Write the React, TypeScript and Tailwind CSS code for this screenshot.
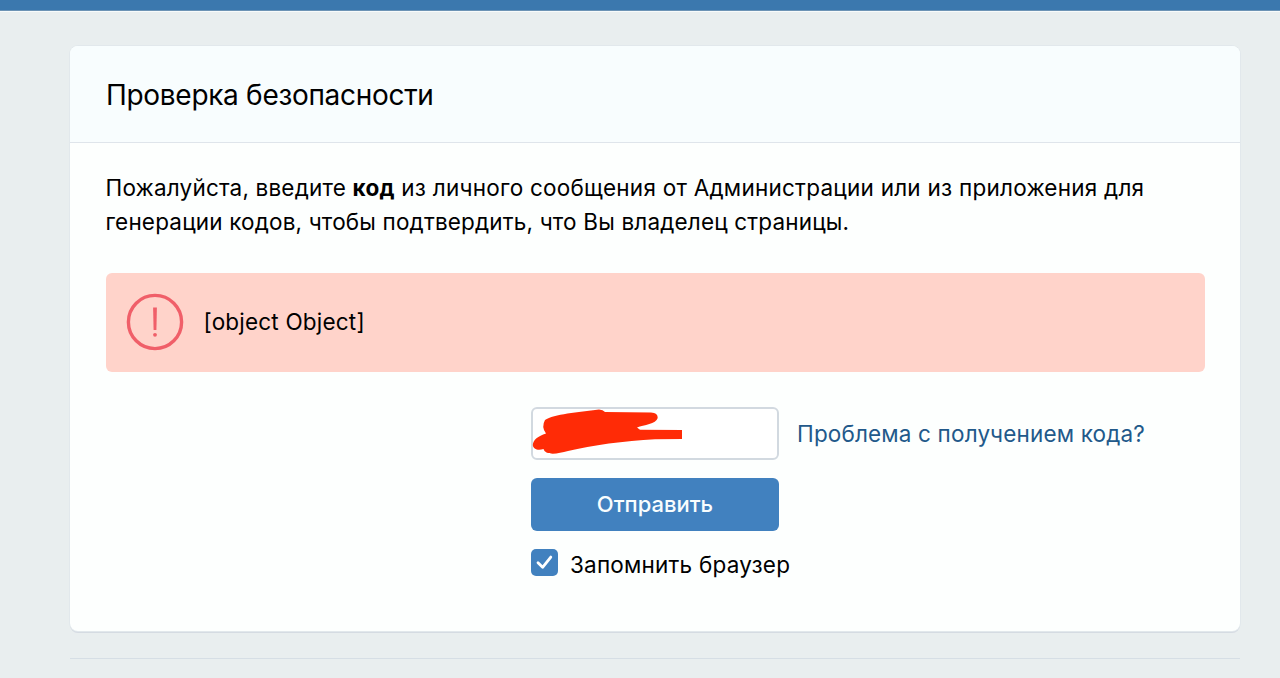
/* Security check page: confirm ownership with a code */

import React, { useState } from "react";

function ErrorNotice({ message }: { message: string }) {
  return (
    <div className="-mx-[0.5px] mt-[34px] flex h-[99px] items-center rounded-md bg-[#ffd3ca] pb-px pl-[21px]">
      <svg width="58" height="58" viewBox="0 0 58 58" fill="none" className="-ml-px shrink-0">
        <circle cx="29" cy="29" r="26.6" stroke="#f05f69" strokeWidth="3.4" />
        <path d="M27.1 14.5h3.8l-.5 22.5h-2.8z" fill="#f05f69" />
        <circle cx="29" cy="41.8" r="1.9" fill="#f05f69" />
      </svg>
      <span className="ml-5 text-[22.5px] tracking-[0.2px]">{message}</span>
    </div>
  );
}

function CodeField() {
  return (
    <div className="relative h-[53px] w-[248px] rounded-md border-2 border-[#d2d9e0] bg-white">
      <svg
        width="248"
        height="53"
        viewBox="531 407 248 53"
        className="absolute -left-0.5 -top-0.5"
        fill="#ff2b06"
      >
        <path d="M545 420C554 414 578 412 599 409.4Q603 409.5 605 412L651 412.4Q658 412.7 657.7 418C656 424 644 425 637 427.5L640 429.7L682 430V439L655 439.2C624 441 592 445 568 451C560 453 552 455 546.5 452.5Q544 451 543.5 449C538 451 533 449 532.8 445C533 440 538 436 546 433.5Q541 427 545 420Z" />
      </svg>
    </div>
  );
}

export default function App() {
  const [remember, setRemember] = useState(true);

  return (
    <div className="h-[678px] overflow-hidden bg-[#e9eeef] font-['Inter','Noto_Sans',sans-serif] text-black">
      <div className="h-[11px] border-b border-[#6d93b5] bg-[#3b78ae]" />
      <div className="h-px bg-[#f8fbfb]" />

      <main className="mt-[34px] ml-[70px] w-[1170px]">
        <section className="h-[585px] overflow-hidden rounded-lg bg-[#fdfffe] shadow-[0_0_0_1px_#e2e8ec,0_2px_0_0_#d5dbe2]">
          <header className="flex h-[97px] items-center border-b border-[#dfe5eb] bg-[#f8fdfe] px-9">
            <h1 className="pt-px text-[28px] leading-none tracking-[-0.3px]">Проверка безопасности</h1>
          </header>

          <div className="px-9 pt-[28px]">
            <p className="-ml-[0.5px] whitespace-nowrap text-[22.5px] leading-[34px]">
              <span className="tracking-[0.24px]">
                <span className="tracking-[0.18px]">Пожалуйста, введите </span>
                <b>код</b> из личного сообщения от Администрации или из приложения для
              </span>
              <br />
              <span className="tracking-[0.17px]">
                генерации кодов, чтобы подтвердить, что Вы владелец страницы.
              </span>
            </p>

            <ErrorNotice message="[object Object]" />

            <form className="ml-[425px] pt-[35px]" onSubmit={(e) => e.preventDefault()}>
              <div className="flex items-center">
                <CodeField />
                <a href="#" className="ml-[18px] whitespace-nowrap text-[22.5px] tracking-[0.16px] text-[#22598a]">
                  Проблема с получением кода?
                </a>
              </div>
              <button className="mt-[18px] block h-[53px] w-[248px] rounded-md bg-[#4181bf] text-[22px] font-medium text-[#f8fdfe]">
                Отправить
              </button>
              <label className="mt-[17.5px] flex w-max items-start">
                <input
                  type="checkbox"
                  className="sr-only"
                  checked={remember}
                  onChange={() => setRemember(!remember)}
                />
                <span className="flex size-[27px] items-center justify-center rounded-[5px] bg-[#4181bf]">
                  {remember && (
                    <svg width="27" height="27" viewBox="0 0 27 27" fill="none" stroke="#fff" strokeWidth="2.8">
                      <path d="M7 13.8l4.6 4.5 8.2-10.2" strokeLinecap="round" strokeLinejoin="round" />
                    </svg>
                  )}
                </span>
                <span className="ml-3 pt-[2.4px] text-[22.5px] leading-[27px] tracking-[0.2px]">Запомнить браузер</span>
              </label>
            </form>
          </div>
        </section>

        <div className="mt-[27px] h-px bg-[#d6dee5]" />
      </main>
    </div>
  );
}
